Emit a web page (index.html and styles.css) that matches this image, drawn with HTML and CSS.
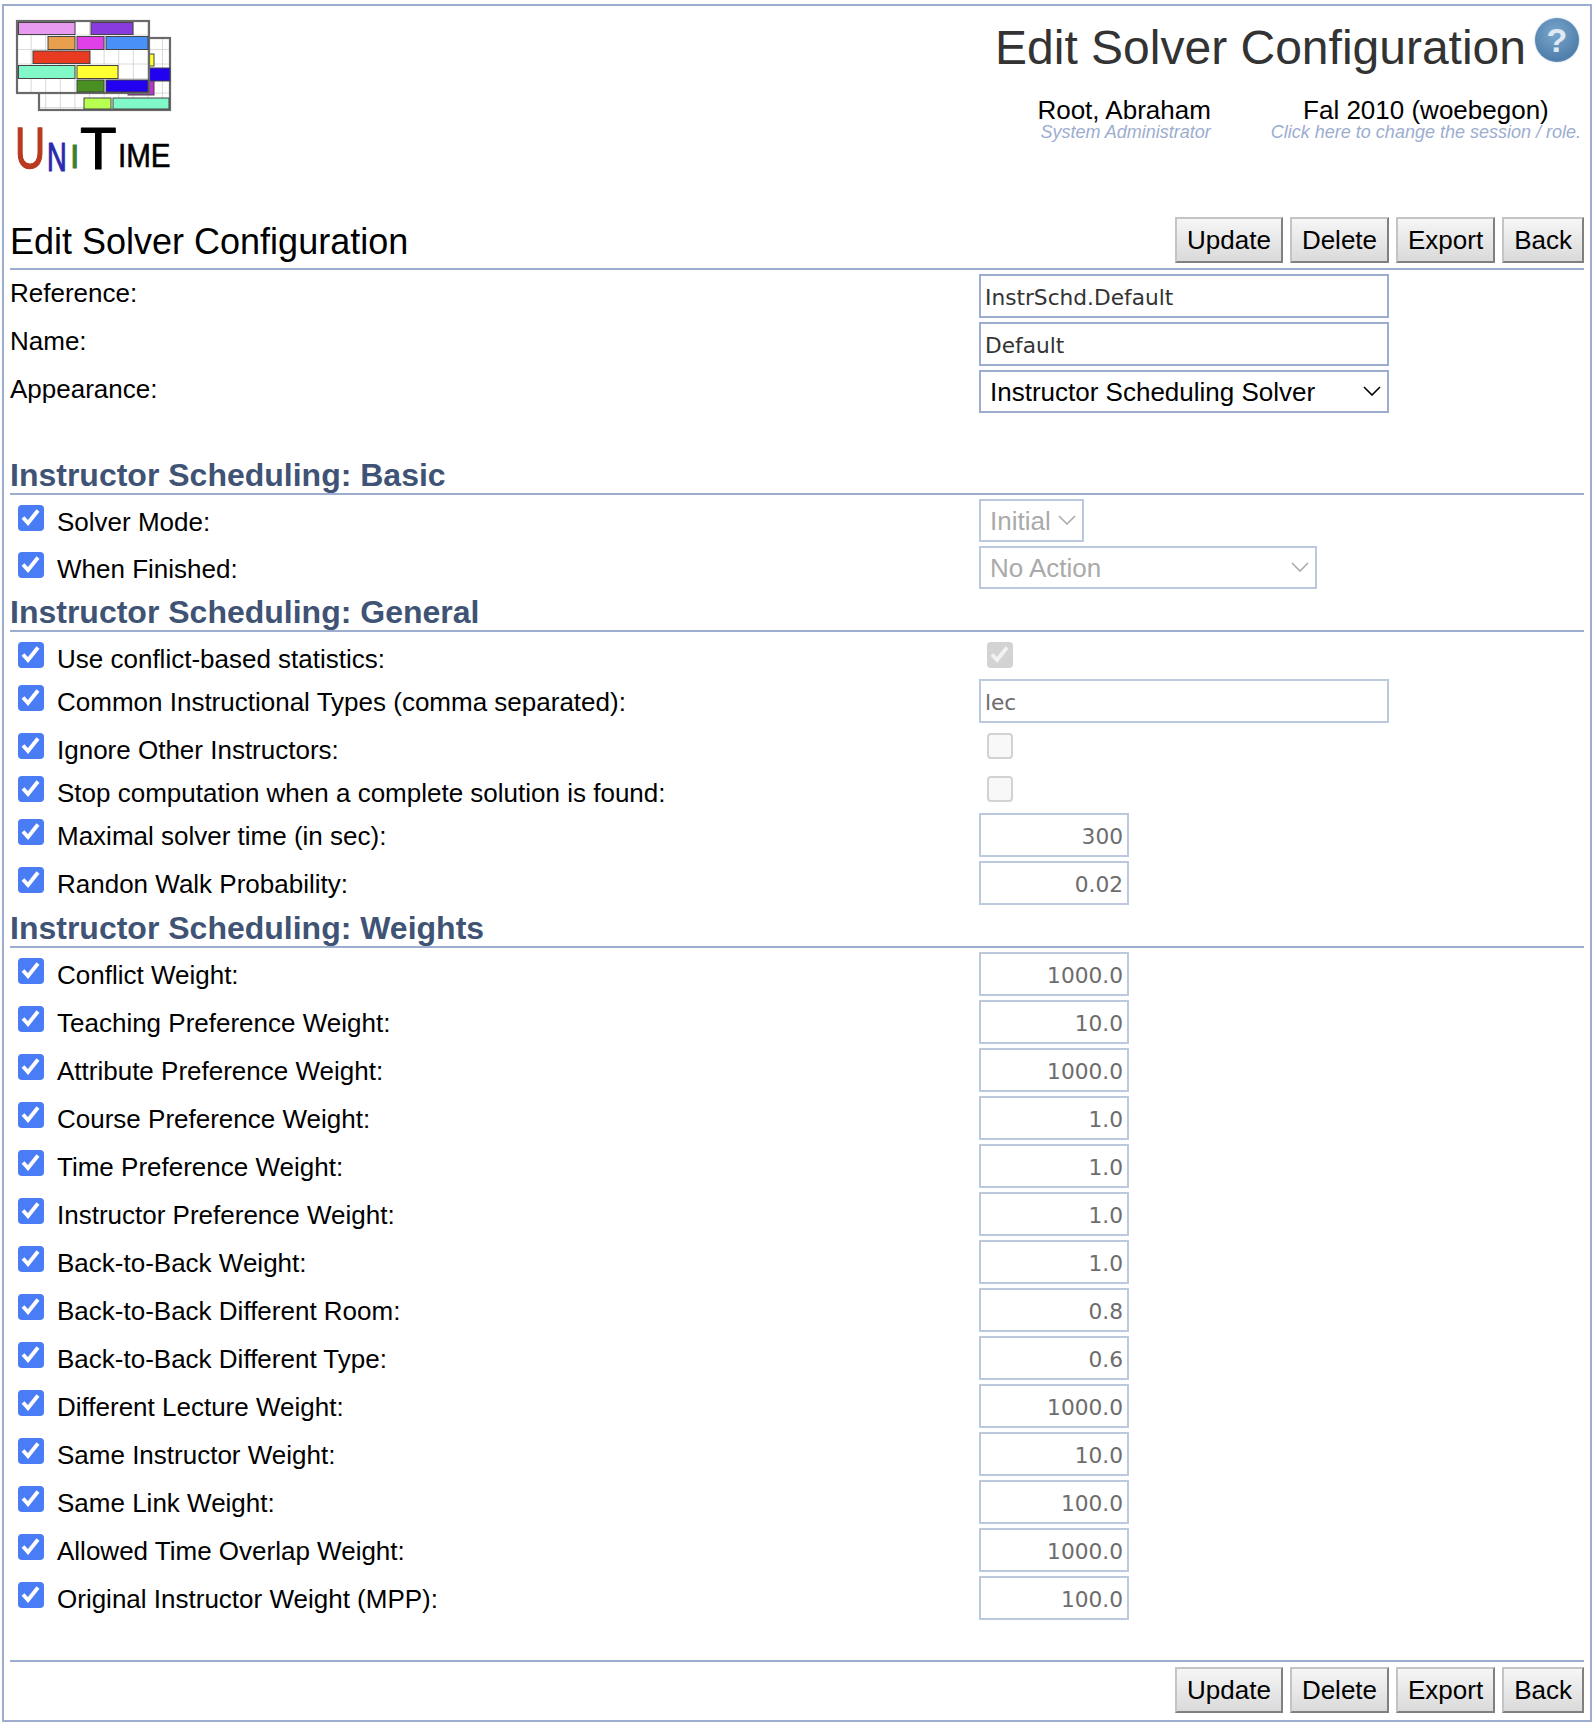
FILE: index.html
```html
<!DOCTYPE html>
<html lang="en">
<head>
  <meta charset="UTF-8" />
  <title>Edit Solver Configuration</title>
  <link rel="stylesheet" href="styles.css">
</head>
<body>
  <svg class="defs" width="0" height="0">
    <symbol id="tick" viewBox="0 0 26 26">
      <path d="M5 12.5l5 5.5 10-12.5" fill="none" stroke="currentColor" stroke-width="3.8" />
    </symbol>
    <symbol id="chevron" viewBox="0 0 18 10">
      <path d="M1 1l8 8 8-8" fill="none" stroke="currentColor" stroke-width="1.6" />
    </symbol>
  </svg>

  <div class="page">
    <div class="header">
      <svg class="logo" width="164" height="172" viewBox="12 18 164 172">
        <defs>
          <pattern id="cells" x="17" y="21" width="14.6" height="14.5" patternUnits="userSpaceOnUse">
            <path d="M14.6 0V14.5M0 14.5H14.6" fill="none" stroke="#cfcfcf" stroke-width="1.6" />
          </pattern>
          <filter id="soft" x="-5%" y="-5%" width="110%" height="110%">
            <feGaussianBlur stdDeviation="0.5" />
          </filter>
        </defs>
        <g filter="url(#soft)">
          <!-- grilles -->
          <rect x="39" y="38" width="131" height="72" fill="#fff" />
          <rect x="39" y="38" width="131" height="72" fill="url(#cells)" stroke="#6a6a6a" stroke-width="2.2" />
          <g stroke="#444" stroke-width="1">
            <rect x="128" y="80" width="26" height="15" fill="#c030d0" />
            <rect x="149" y="54" width="5" height="12" fill="#ffff30" />
            <rect x="149" y="68" width="21" height="13" fill="#2000f0" />
          </g>
          <rect x="17" y="21" width="132" height="72" fill="#fff" />
          <rect x="17" y="21" width="132" height="72" fill="url(#cells)" stroke="#6a6a6a" stroke-width="2.2" />
          <!-- cours -->
          <g stroke="#444" stroke-width="1">
            <rect x="18.5" y="22.5" width="56.5" height="12" fill="#e89af0" />
            <rect x="91" y="22.5" width="42" height="12" fill="#8a3ae0" />
            <rect x="48" y="36.5" width="27" height="13" fill="#e8a050" />
            <rect x="77" y="36.5" width="27" height="13" fill="#e040e8" />
            <rect x="106" y="36.5" width="42" height="13" fill="#4a90f8" />
            <rect x="33" y="51" width="57" height="12.5" fill="#e83a20" />
            <rect x="18.5" y="65.5" width="56.5" height="13" fill="#80f8c8" />
            <rect x="77" y="65.5" width="41" height="13" fill="#ffff30" />
            <rect x="77" y="80" width="27" height="12" fill="#4a9020" />
            <rect x="106" y="80" width="42" height="12" fill="#2000f0" />
            <rect x="84" y="98" width="27" height="11" fill="#b8ff50" />
            <rect x="113" y="98" width="56" height="11" fill="#80f8c8" />
          </g>
        </g>
        <text class="logo-text logo-u" transform="translate(15 168) scale(.72 1)">U</text>
        <text class="logo-text logo-n" transform="translate(47 171) scale(.68 1)">N</text>
        <text class="logo-text logo-i" transform="translate(70 168)">I</text>
        <text class="logo-text logo-t" transform="translate(80 169)">T</text>
        <text class="logo-text logo-me" transform="translate(118 167) scale(.87 1)">IME</text>
      </svg>

      <div class="header-right">
        <div class="title-line">
          <span class="title">Edit Solver Configuration</span>
          <span class="help">?</span>
        </div>
        <div class="session">
          <div class="session-block user-block">
            <div class="session-main">Root, Abraham</div>
            <div class="session-sub">System Administrator</div>
          </div>
          <div class="session-block">
            <div class="session-main">Fal 2010 (woebegon)</div>
            <div class="session-sub">Click here to change the session / role.</div>
          </div>
        </div>
      </div>
    </div>

    <div class="section-head">
      <span class="section-title">Edit Solver Configuration</span>
      <div class="buttons">
        <button type="button" class="btn">Update</button>
        <button type="button" class="btn">Delete</button>
        <button type="button" class="btn">Export</button>
        <button type="button" class="btn">Back</button>
      </div>
    </div>

    <div class="row">
      <div class="label plain"><span>Reference:</span></div>
      <input class="text-input enabled" type="text" value="InstrSchd.Default" />
    </div>
    <div class="row">
      <div class="label plain"><span>Name:</span></div>
      <input class="text-input enabled" type="text" value="Default" />
    </div>
    <div class="row select-row">
      <div class="label plain"><span>Appearance:</span></div>
      <div class="select-box wide enabled">Instructor Scheduling Solver<svg class="chevron"><use href="#chevron" /></svg></div>
    </div>

    <h2 class="group first">Instructor Scheduling: Basic</h2>
    <div class="row select-row">
      <div class="label"><span class="check"><svg><use href="#tick" /></svg></span><span>Solver Mode:</span></div>
      <div class="select-box small">Initial<svg class="chevron"><use href="#chevron" /></svg></div>
    </div>
    <div class="row select-row">
      <div class="label"><span class="check"><svg><use href="#tick" /></svg></span><span>When Finished:</span></div>
      <div class="select-box medium">No Action<svg class="chevron"><use href="#chevron" /></svg></div>
    </div>

    <h2 class="group">Instructor Scheduling: General</h2>
    <div class="row check-row">
      <div class="label"><span class="check"><svg><use href="#tick" /></svg></span><span>Use conflict-based statistics:</span></div>
      <span class="check value-check off"><svg><use href="#tick" /></svg></span>
    </div>
    <div class="row">
      <div class="label"><span class="check"><svg><use href="#tick" /></svg></span><span>Common Instructional Types (comma separated):</span></div>
      <input class="text-input" type="text" value="lec" disabled />
    </div>
    <div class="row check-row">
      <div class="label"><span class="check"><svg><use href="#tick" /></svg></span><span>Ignore Other Instructors:</span></div>
      <span class="check value-check empty"></span>
    </div>
    <div class="row check-row">
      <div class="label"><span class="check"><svg><use href="#tick" /></svg></span><span>Stop computation when a complete solution is found:</span></div>
      <span class="check value-check empty"></span>
    </div>
    <div class="row">
      <div class="label"><span class="check"><svg><use href="#tick" /></svg></span><span>Maximal solver time (in sec):</span></div>
      <input class="num-input" type="text" value="300" disabled />
    </div>
    <div class="row">
      <div class="label"><span class="check"><svg><use href="#tick" /></svg></span><span>Randon Walk Probability:</span></div>
      <input class="num-input" type="text" value="0.02" disabled />
    </div>

    <h2 class="group">Instructor Scheduling: Weights</h2>
    <div class="row">
      <div class="label"><span class="check"><svg><use href="#tick" /></svg></span><span>Conflict Weight:</span></div>
      <input class="num-input" type="text" value="1000.0" disabled />
    </div>
    <div class="row">
      <div class="label"><span class="check"><svg><use href="#tick" /></svg></span><span>Teaching Preference Weight:</span></div>
      <input class="num-input" type="text" value="10.0" disabled />
    </div>
    <div class="row">
      <div class="label"><span class="check"><svg><use href="#tick" /></svg></span><span>Attribute Preference Weight:</span></div>
      <input class="num-input" type="text" value="1000.0" disabled />
    </div>
    <div class="row">
      <div class="label"><span class="check"><svg><use href="#tick" /></svg></span><span>Course Preference Weight:</span></div>
      <input class="num-input" type="text" value="1.0" disabled />
    </div>
    <div class="row">
      <div class="label"><span class="check"><svg><use href="#tick" /></svg></span><span>Time Preference Weight:</span></div>
      <input class="num-input" type="text" value="1.0" disabled />
    </div>
    <div class="row">
      <div class="label"><span class="check"><svg><use href="#tick" /></svg></span><span>Instructor Preference Weight:</span></div>
      <input class="num-input" type="text" value="1.0" disabled />
    </div>
    <div class="row">
      <div class="label"><span class="check"><svg><use href="#tick" /></svg></span><span>Back-to-Back Weight:</span></div>
      <input class="num-input" type="text" value="1.0" disabled />
    </div>
    <div class="row">
      <div class="label"><span class="check"><svg><use href="#tick" /></svg></span><span>Back-to-Back Different Room:</span></div>
      <input class="num-input" type="text" value="0.8" disabled />
    </div>
    <div class="row">
      <div class="label"><span class="check"><svg><use href="#tick" /></svg></span><span>Back-to-Back Different Type:</span></div>
      <input class="num-input" type="text" value="0.6" disabled />
    </div>
    <div class="row">
      <div class="label"><span class="check"><svg><use href="#tick" /></svg></span><span>Different Lecture Weight:</span></div>
      <input class="num-input" type="text" value="1000.0" disabled />
    </div>
    <div class="row">
      <div class="label"><span class="check"><svg><use href="#tick" /></svg></span><span>Same Instructor Weight:</span></div>
      <input class="num-input" type="text" value="10.0" disabled />
    </div>
    <div class="row">
      <div class="label"><span class="check"><svg><use href="#tick" /></svg></span><span>Same Link Weight:</span></div>
      <input class="num-input" type="text" value="100.0" disabled />
    </div>
    <div class="row">
      <div class="label"><span class="check"><svg><use href="#tick" /></svg></span><span>Allowed Time Overlap Weight:</span></div>
      <input class="num-input" type="text" value="1000.0" disabled />
    </div>
    <div class="row">
      <div class="label"><span class="check"><svg><use href="#tick" /></svg></span><span>Original Instructor Weight (MPP):</span></div>
      <input class="num-input" type="text" value="100.0" disabled />
    </div>

    <div class="footer">
      <div class="buttons">
        <button type="button" class="btn">Update</button>
        <button type="button" class="btn">Delete</button>
        <button type="button" class="btn">Export</button>
        <button type="button" class="btn">Back</button>
      </div>
    </div>
  </div>
</body>
</html>
```

FILE: styles.css
```css
body {
  margin: 0;
  font-family: "Liberation Sans", Arial, sans-serif;
  font-size: 26px;
  color: #000;
  background: #fff;
}
.defs {
  position: absolute;
}
.page {
  box-sizing: border-box;
  width: 1590px;
  height: 1718px;
  margin: 4px 0 0 2px;
  padding: 0 6px 0 6px;
  border: 2px solid #9cadcf;
}

/* header */
.header {
  display: flex;
  justify-content: space-between;
  height: 200px;
}
.logo {
  margin: 12px 0 0 2px;
}
.logo-text {
  font-family: "Liberation Sans", Arial, sans-serif;
  stroke-linejoin: round;
}
.logo-u {
  font-size: 58px;
  fill: #b83a20;
  stroke: #b83a20;
  stroke-width: 1.5px;
}
.logo-n {
  font-size: 40px;
  fill: #2a2ab0;
  stroke: #2a2ab0;
  stroke-width: 1.2px;
}
.logo-i {
  font-size: 34px;
  fill: #3f7f30;
  stroke: #3f7f30;
  stroke-width: 1px;
}
.logo-t {
  font-size: 60px;
  fill: #000;
  stroke: #000;
  stroke-width: 1px;
}
.logo-me {
  font-size: 34px;
  fill: #000;
  stroke: #000;
  stroke-width: .6px;
}
.header-right {
  display: flex;
  flex-direction: column;
  align-items: flex-end;
}
.title-line {
  display: flex;
  align-items: flex-start;
  gap: 9px;
  margin: 12px 5px 0 0;
}
.title {
  margin-top: 2px;
  font-size: 48px;
  line-height: 56px;
  color: #333;
}
.help {
  width: 44px;
  height: 44px;
  border-radius: 50%;
  background: radial-gradient(circle at 45% 35%, #7ba6cc, #4f7fab 70%, #6d94b8);
  box-shadow: 0 0 2px #9db8d0;
  color: #dfe9f3;
  font-weight: bold;
  font-size: 34px;
  line-height: 44px;
  text-align: center;
}
.session {
  display: flex;
  gap: 60px;
  margin: 19px 3px 0 0;
}
.session-block {
  text-align: center;
}
.user-block {
  text-align: right;
}
.session-main {
  font-size: 26px;
  line-height: 30px;
}
.session-sub {
  font-size: 18px;
  font-style: italic;
  line-height: 18px;
  margin-top: -2px;
  color: #9cadcf;
}

/* section head and buttons */
.section-head {
  display: flex;
  justify-content: space-between;
  align-items: flex-end;
  height: 57px;
  padding-bottom: 5px;
  margin-bottom: 1px;
  border-bottom: 2px solid #9cadcf;
  box-sizing: content-box;
}
.section-title {
  font-size: 36px;
  line-height: 42px;
}
.buttons {
  display: flex;
  gap: 7px;
}
.btn {
  height: 46px;
  padding: 0 10px;
  font-family: "Liberation Sans", Arial, sans-serif;
  font-size: 26px;
  color: #000;
  background: linear-gradient(#f6f6f6, #dadada);
  border: 2px solid;
  border-color: #c4c4c4 #808080 #808080 #c4c4c4;
}

/* rows */
.row {
  display: flex;
  box-sizing: border-box;
  height: 48px;
  padding-top: 3px;
}
.select-row {
  height: 47px;
}
.check-row {
  height: 43px;
}
.label {
  display: flex;
  width: 969px;
  flex-shrink: 0;
  padding-left: 8px;
  box-sizing: border-box;
  line-height: 30px;
}
.label > span:last-child {
  padding-top: 8px;
}
.label.plain {
  padding-left: 0;
}
.label.plain > span:last-child {
  padding-top: 4px;
}
.check {
  display: block;
  box-sizing: border-box;
  width: 26px;
  height: 26px;
  margin: 6px 13px 0 0;
  border-radius: 4px;
  background: #4a7cf6;
  color: #fff;
}
.check svg {
  display: block;
  width: 26px;
  height: 26px;
}
.value-check {
  margin-left: 8px;
}
.value-check.off {
  background: #d3d3d3;
  color: #f2f2f2;
}
.value-check.empty {
  background: #f8f8f8;
  border: 2px solid #d2d2d2;
}

/* inputs */
.text-input,
.num-input {
  box-sizing: border-box;
  height: 44px;
  margin: 0;
  padding: 2px 4px 0;
  font-family: "DejaVu Sans", sans-serif;
  font-size: 21.7px;
  color: #6d6d6d;
  background: #fff;
  border: 2px solid #bcc8de;
  border-radius: 0;
  outline: none;
}
.text-input {
  width: 410px;
}
.num-input {
  width: 150px;
  text-align: right;
}
.text-input.enabled {
  color: #333;
  border-color: #9cadcf;
}
.select-box {
  position: relative;
  box-sizing: border-box;
  height: 43px;
  padding-left: 9px;
  line-height: 41px;
  color: #aaa;
  border: 2px solid #bcc8de;
}
.select-box.enabled {
  color: #000;
  border-color: #9cadcf;
}
.select-box.wide {
  width: 410px;
}
.select-box.small {
  width: 105px;
}
.select-box.medium {
  width: 338px;
}
.chevron {
  position: absolute;
  top: 14px;
  right: 6px;
  width: 18px;
  height: 10px;
}

/* group headings */
.group {
  box-sizing: border-box;
  height: 42px;
  margin: 0 0 1px;
  font-size: 32px;
  line-height: 44px;
  font-weight: bold;
  color: #3f5375;
  border-bottom: 2px solid #9cadcf;
}
.group.first {
  margin-top: 39px;
}

/* footer */
.footer {
  display: flex;
  justify-content: flex-end;
  margin-top: 39px;
  padding-top: 5px;
  border-top: 2px solid #9cadcf;
}
```
